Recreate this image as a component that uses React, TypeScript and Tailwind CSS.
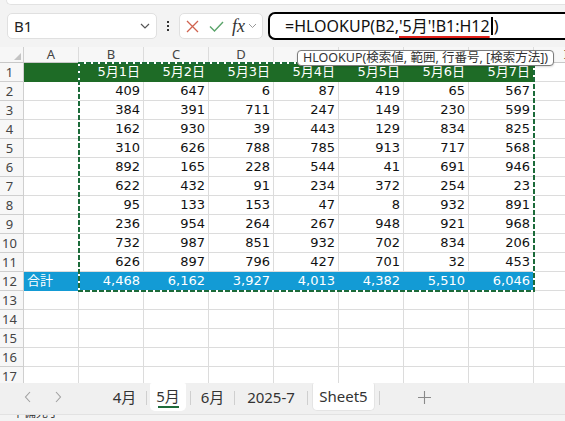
import * as React from "react";

const cols = ["A", "B", "C", "D", "E", "F", "G", "H", "I"];
const widths = [55, 65, 65, 65, 65, 65, 65, 65, 65];

const data: number[][] = [
  [409, 647, 6, 87, 419, 65, 567],
  [384, 391, 711, 247, 149, 230, 599],
  [162, 930, 39, 443, 129, 834, 825],
  [310, 626, 788, 785, 913, 717, 568],
  [892, 165, 228, 544, 41, 691, 946],
  [622, 432, 91, 234, 372, 254, 23],
  [95, 133, 153, 47, 8, 932, 891],
  [236, 954, 264, 267, 948, 921, 968],
  [732, 987, 851, 932, 702, 834, 206],
  [626, 897, 796, 427, 701, 32, 453],
];

const totals = data[0].map((_, c) => data.reduce((s, r) => s + r[c], 0));

const uiFont = { fontFamily: '"Noto Sans", "Noto Sans CJK JP", sans-serif' };
const cellFont = { fontFamily: '"DejaVu Sans", "Noto Sans CJK JP", sans-serif' };

function Row({ n, cells, variant }: { n: number; cells: string[]; variant?: "head" | "total" }) {
  const band =
    variant === "head"
      ? "bg-[#1e6b26] border-[#1e6b26] text-white"
      : variant === "total"
      ? "bg-[#139bd5] border-[#139bd5] text-white"
      : "border-[#dcdcdc] text-[#111]";
  return (
    <div className="flex h-[19px] shrink-0">
      <div className="w-[24px] shrink-0 border-r border-b border-[#cfcfcf] bg-[#f7f7f7] pr-[4px] text-center text-[13px] leading-[19px] text-[#444]">
        {n}
      </div>
      {widths.map((w, i) => {
        const inBand = variant && i < 8;
        const text = cells[i] ?? "";
        return (
          <div
            key={i}
            style={{ width: w, ...cellFont }}
            className={`shrink-0 border-r border-b px-[3px] text-[13px] leading-[18px] whitespace-nowrap ${
              inBand ? band : "border-[#dcdcdc] text-[#111]"
            } ${i === 0 ? "text-left" : "text-right"}`}
          >
            {text}
          </div>
        );
      })}
    </div>
  );
}

export default function App() {
  const rows: React.ReactNode[] = [];
  rows.push(
    <Row
      key={1}
      n={1}
      variant="head"
      cells={["", "5月1日", "5月2日", "5月3日", "5月4日", "5月5日", "5月6日", "5月7日"]}
    />
  );
  data.forEach((r, i) =>
    rows.push(<Row key={i + 2} n={i + 2} cells={["", ...r.map(String)]} />)
  );
  rows.push(
    <Row key={12} n={12} variant="total" cells={["合計", ...totals.map((t) => t.toLocaleString("en-US"))]} />
  );
  for (let n = 13; n <= 18; n++) rows.push(<Row key={n} n={n} cells={[]} />);

  return (
    <div
      className="relative flex h-[421px] w-[565px] flex-col overflow-hidden bg-[#f3f3f3]"
      style={uiFont}
    >
      {/* ribbon edge */}
      <div className="ml-[6px] h-[5px] shrink-0 rounded-bl-[7px] border-b border-l border-[#e2e2e2] bg-white" />

      {/* formula bar */}
      <div className="mt-[7px] flex h-[28px] shrink-0 items-center">
        <div className="ml-[7px] flex h-[26px] w-[150px] items-center justify-between rounded-[5px] border border-[#e0e0e0] bg-white pl-[6px] pr-[6px]">
          <span className="text-[15px] text-[#222]">B1</span>
          <svg width="10" height="6" viewBox="0 0 10 6" fill="none" stroke="#555" strokeWidth="1.2">
            <path d="M1 1l4 4 4-4" />
          </svg>
        </div>
        <div className="flex w-[22px] flex-col items-center gap-[2px]">
          <span className="h-[2px] w-[2px] bg-[#333]" />
          <span className="h-[2px] w-[2px] bg-[#333]" />
          <span className="h-[2px] w-[2px] bg-[#333]" />
        </div>
        <div className="flex h-[26px] w-[84px] items-center rounded-[5px] border border-[#e0e0e0] bg-white pl-[6px]">
          <svg width="13" height="13" viewBox="0 0 13 13" stroke="#d0634f" strokeWidth="1.3">
            <path d="M1 1l11 11M12 1L1 12" />
          </svg>
          <svg className="ml-[10px]" width="15" height="11" viewBox="0 0 15 11" fill="none" stroke="#5aa46a" strokeWidth="1.4">
            <path d="M1 5.5l4.5 4.5L14 1" />
          </svg>
          <span
            className="ml-[8px] text-[18px] italic leading-none text-[#333]"
            style={{ fontFamily: '"Liberation Serif", serif' }}
          >
            fx
          </span>
          <svg className="ml-[3px]" width="9" height="6" viewBox="0 0 9 6" fill="none" stroke="#999" strokeWidth="1">
            <path d="M1 1l3.5 3.5L8 1" />
          </svg>
        </div>
        <div className="ml-[5px] flex h-[28px] flex-1 items-center rounded-l-[7px] border-y-2 border-l-2 border-black bg-white pl-[15px]">
          <span className="text-[16px] text-[#111] whitespace-nowrap">
            =HLOOKUP(B2,
            <span className="underline decoration-[#e0201a] decoration-[1.5px] underline-offset-[4px]">
              '5月'!B1:H12
            </span>
            <span className="mx-[1px] inline-block h-[18px] w-[2px] translate-y-[3px] bg-black" />)
          </span>
        </div>
      </div>

      {/* grid */}
      <div className="relative mt-[7px] flex-1 overflow-hidden bg-white">
        <div className="flex h-[16px] shrink-0 border-b border-[#c8c8c8] bg-[#f7f7f7]">
          <div className="relative w-[24px] shrink-0 border-r border-[#cfcfcf]">
            <div className="absolute right-[2px] bottom-[2px] h-0 w-0 border-b-[7px] border-l-[7px] border-b-[#c4c4c4] border-l-transparent" />
          </div>
          {cols.map((c, i) => (
            <div
              key={c}
              style={{ width: widths[i] }}
              className="shrink-0 border-r border-[#dcdcdc] text-center text-[13px] leading-[15px] text-[#444]"
            >
              {c}
            </div>
          ))}
        </div>
        {rows}

        {/* copy marquee */}
        <svg className="absolute left-[78px] top-[15px]" width="457" height="230">
          <rect x="1" y="1" width="455" height="228" fill="none" stroke="#fff" strokeWidth="2" />
          <rect x="1" y="1" width="455" height="228" fill="none" stroke="#1c6b3a" strokeWidth="2" strokeDasharray="5 2" />
        </svg>
      </div>

      {/* function tooltip */}
      <div className="absolute left-[297px] top-[50px] flex h-[16px] items-center rounded-[4px] border border-[#7c7c7c] bg-white px-[5px] text-[12.5px] leading-none whitespace-nowrap text-[#333] shadow-[0_1px_2px_rgba(0,0,0,0.15)]">
        HLOOKUP(検索値, 範囲, 行番号, [検索方法])
      </div>

      {/* sheet tabs */}
      <div className="flex h-[31px] shrink-0 items-start bg-[#f0f0f0] text-[15px] text-[#333]">
        <div className="flex h-[28px] w-[103px] items-center text-[#a0a0a0]">
          <svg className="ml-[24px]" width="8" height="12" viewBox="0 0 8 12" fill="none" stroke="#a0a0a0" strokeWidth="1.1">
            <path d="M6 1L1.5 6 6 11" />
          </svg>
          <svg className="ml-[22px]" width="8" height="12" viewBox="0 0 8 12" fill="none" stroke="#a0a0a0" strokeWidth="1.1">
            <path d="M2 1l4.5 5L2 11" />
          </svg>
        </div>
        <div className="flex h-[28px] w-[43px] items-center justify-center">4月</div>
        <div className="mt-[8px] h-[14px] w-px bg-[#cfcfcf]" />
        <div className="ml-[3px] flex h-[28px] w-[36px] flex-col items-center justify-center rounded-b-[5px] rounded-t-[2px] bg-white">
          <span className="leading-[19px]">5月</span>
          <span className="h-[2px] w-[21px] bg-[#1e6b3a]" />
        </div>
        <div className="ml-[4px] mt-[8px] h-[14px] w-px bg-[#cfcfcf]" />
        <div className="flex h-[28px] w-[43px] items-center justify-center">6月</div>
        <div className="mt-[8px] h-[14px] w-px bg-[#cfcfcf]" />
        <div className="flex h-[28px] w-[72px] items-center justify-center">2025-7</div>
        <div className="mt-[8px] h-[14px] w-px bg-[#cfcfcf]" />
        <div className="ml-[4px] flex h-[28px] w-[63px] items-center justify-center rounded-b-[5px] rounded-t-[2px] border border-t-0 border-[#e4e4e4] bg-white">
          Sheet5
        </div>
        <div className="ml-[4px] mt-[8px] h-[14px] w-px bg-[#cfcfcf]" />
        <div className="flex h-[28px] w-[88px] items-center justify-center">
          <svg width="13" height="13" viewBox="0 0 13 13" stroke="#8a8a8a" strokeWidth="1.1">
            <path d="M6.5 0v13M0 6.5h13" />
          </svg>
        </div>
      </div>

      {/* status bar (cut off) */}
      <div className="h-[7px] shrink-0 overflow-hidden border-t border-[#e2e2e2] bg-[#f3f3f3]">
        <div className="ml-[12px] -mt-[11px] text-[12px] text-[#333]">準備完了</div>
      </div>
    </div>
  );
}
